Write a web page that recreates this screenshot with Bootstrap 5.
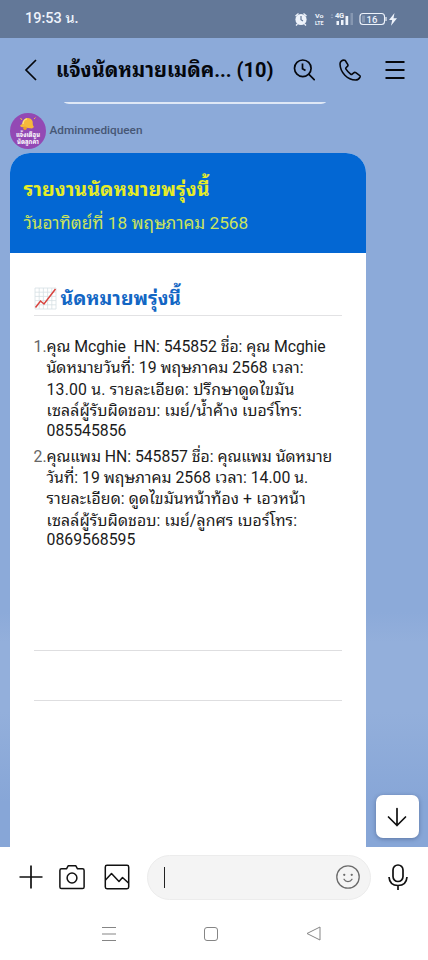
<!DOCTYPE html>
<html lang="th">
<head>
    <meta charset="UTF-8">
    <meta name="viewport" content="width=device-width, initial-scale=1.0">
    <title>แจ้งนัดหมายเมดิควีน</title>
    <link href="https://cdn.jsdelivr.net/npm/bootstrap@5.3.3/dist/css/bootstrap.min.css" rel="stylesheet">
    <style>
        body {
            font-family: Roboto, "Noto Sans Thai Looped", "Droid Sans Thai", Loma, Waree, Garuda, "Noto Sans", sans-serif;
            background-color: #fff;
            color: #111;
        }
        svg {
            display: block;
            flex-shrink: 0;
            fill: none;
            stroke: currentColor;
        }
        .phone {
            width: 428px;
            height: 960px;
        }
        .status-bar {
            height: 38px;
            padding: 0 30px 0 25px;
            background-color: #637898;
            color: #eef3fb;
            font-size: 14.5px;
            font-weight: 500;
        }
        .chat-header {
            height: 64px;
            padding: 0 23px 0 24px;
            background-color: #8caad9;
            color: #05070c;
        }
        .chat-title {
            margin-left: 19px;
            font-size: 20px;
            font-weight: 700;
        }
        .chat-area {
            height: 745px;
            padding: 0 9.5px;
            background: linear-gradient(#8caad9 0, #8caad9 510px, #93afdb 540px, #93afdb 610px, #87a6d7 700px);
        }
        .prev-bubble {
            width: 262px;
            height: 2px;
            margin-left: 54px;
            background-color: #dfe8f6;
            border-radius: 0 0 8px 8px / 0 0 2px 2px;
        }
        .sender {
            height: 36px;
            margin-top: 9px;
            font-size: 11.8px;
            font-weight: 500;
            color: #475775;
        }
        .report {
            width: 356.5px;
            margin-top: 4px;
            border-radius: 20px 20px 0 0;
        }
        .report-top {
            height: 100px;
            padding: 24px 14px 0;
            background-color: #0367d3;
            color: #e6ec28;
        }
        .report-title {
            font-size: 19.7px;
            font-weight: 700;
            line-height: 26px;
        }
        .report-date {
            margin-top: 7px;
            font-size: 17.2px;
            line-height: 26px;
            color: #cbe45c;
        }
        .report-body {
            padding: 30px 24px 0;
        }
        .section-head {
            height: 33px;
            border-bottom: 1px solid #e2e2e4;
            font-size: 19.4px;
            font-weight: 700;
            line-height: 32px;
            color: #1266c4;
        }
        .entry {
            margin-top: 20px;
            font-size: 15.8px;
            line-height: 21.4px;
            color: #1b1b1b;
        }
        .entry + .entry {
            margin-top: 6px;
        }
        .entry-no {
            width: 13px;
            color: #666;
        }
        .entry span {
            display: block;
            white-space: nowrap;
        }
        .entry span:last-child {
            line-height: 18px;
        }
        .entry .tight {
            letter-spacing: -.04px;
        }
        .entry .loose {
            letter-spacing: .1px;
        }
        .entry .looser {
            letter-spacing: .2px;
        }
        .rule-line {
            height: 1px;
            margin-top: 49px;
            background-color: #dedee0;
        }
        .entry + .rule-line {
            margin-top: 101px;
        }
        .to-bottom {
            right: 9.5px;
            bottom: 9px;
            width: 43px;
            height: 43px;
            border-radius: 7px;
            box-shadow: 0 1px 4px rgba(40, 60, 100, .45);
        }
        .composer {
            height: 60px;
            padding: 0 20px 0 18.5px;
        }
        .gallery {
            margin-left: 19px;
        }
        .msg-input {
            width: 224px;
            height: 45px;
            margin-left: 17.5px;
            padding: 0 10px 0 16px;
            background-color: #f4f4f4;
            border: 1px solid #ececec;
            color: #6b6b6b;
        }
        .caret {
            width: 1px;
            height: 21px;
            background-color: #222;
        }
        .sys-nav {
            height: 53px;
            padding: 0 107.5px 0 100.5px;
            color: #858585;
        }
    </style>
</head>
<body>
<div class="phone d-flex flex-column overflow-hidden">

    <!-- Status bar -->
    <div class="status-bar d-flex align-items-center justify-content-between">
        <span id="clock">19:53 น.</span>
        <svg width="104" height="16" viewBox="294 11 104 16">
            <circle cx="301" cy="19.500" r="5.600" fill="#eef3fb" stroke="none"/>
            <path d="M295.500 16l3-2.500M306.500 16l-3-2.500M297.500 24l-1.500 1.500M304.500 24l1.500 1.500" stroke-width="1.300"/>
            <path d="M301 16v3.700l2 1.200" stroke="#637898" stroke-width="1.200"/>
            <g fill="#eef3fb" stroke="none" font-family="Roboto, sans-serif" font-weight="700">
                <text x="315" y="17.700" font-size="6" textLength="8.500" lengthAdjust="spacingAndGlyphs">Vo</text>
                <text x="315" y="24.800" font-size="6" textLength="8.500" lengthAdjust="spacingAndGlyphs">LTE</text>
                <text x="335" y="18" font-size="7.500" textLength="9">4G</text>
                <text x="366.500" y="22.700" font-size="9.500" font-weight="500" textLength="11">16</text>
                <path d="M336.500 21h2.500v4h-2.500zM341 20h2.500v5H341zM345.500 16h2.700v9h-2.700z"/>
                <path d="M350.500 13h2.500v12h-2.500z" opacity=".25"/>
                <path d="M330.500 15.500l1.500-1.500 1.500 1.500zM330.500 17l1.500 1.500 1.500-1.500z" opacity=".35"/>
                <path d="M394.500 13l-5.500 7h3.200l-1.200 5.800 6-7.500h-3.500z"/>
                <path d="M362 15.500h3v7h-3z" opacity=".25"/>
            </g>
            <rect x="360" y="13.500" width="24.500" height="11" rx="3" stroke-width="1.100"/>
            <path d="M386 17v4" stroke-width="1.200"/>
        </svg>
    </div>

    <!-- Chat header -->
    <div class="chat-header d-flex align-items-center">
        <svg width="13" height="22" viewBox="0 0 13 22" stroke-width="1.700"><path d="M12 1L2 11l10 10"/></svg>
        <div class="chat-title text-nowrap"><span id="title">แจ้งนัดหมายเมดิค... (10)</span></div>
        <div class="d-flex align-items-center ms-auto">
            <svg width="22" height="22" viewBox="0 0 22 22" stroke-width="1.700">
                <circle cx="9.800" cy="9.300" r="8.300"/>
                <path d="M15.700 15.200l6 6M9.500 4.500v5.200l3 1.800"/>
            </svg>
            <svg class="ms-4" width="22" height="22" viewBox="0 0 22 22" stroke-width="1.600" stroke-linejoin="round">
                <path d="M5.200 1.100C3 .9 1 2.700 1 5c.3 8.700 7.500 15.800 15.600 16 1.900 0 3.500-1 4.400-2.900.3-.7.1-1.400-.5-1.800l-3.700-2.600c-.7-.5-1.500-.4-2.100.1l-1.500 1.300c-.5.4-1.100.4-1.600 0-1.800-1.400-3.400-3.100-4.600-5-.4-.6-.2-1.200.2-1.600l1.200-1.100c.6-.5.7-1.300.3-2L6.400 1.800c-.3-.4-.7-.7-1.200-.7z"/>
            </svg>
            <svg width="20" height="20" viewBox="0 0 20 20" stroke-width="1.900" class="ms-4"><path d="M.5 2h19M.5 10h19M.5 18h19"/></svg>
        </div>
    </div>

    <!-- Messages -->
    <div class="chat-area position-relative overflow-hidden">
        <div class="prev-bubble"></div>
        <div class="sender d-flex align-items-center">
            <svg width="36" height="36" viewBox="0 0 36 36">
                <g stroke="none">
                    <circle cx="18" cy="18" r="18" fill="#9349b4"/>
                    <path d="M10 12.500c2.500-1 3-3.500 4-5.500 2-3 7-2.500 8.500 1 .6 2-.4 4 1.500 6l-2 1.500-11-1.500z" fill="#f6b83c"/>
                    <circle cx="15" cy="15.300" r="1.700" fill="#f0a126"/>
                </g>
                <path d="M13 11c0-3 2-5 4-5" stroke="#ffe27c" stroke-width="1.500"/>
                <path d="M10.500 5l1.500 2M24 6l1.500-1.500" stroke="#f6b83c"/>
                <g fill="#fff" stroke="none" font-size="7" font-weight="700">
                    <text x="6" y="23.500" textLength="24" lengthAdjust="spacingAndGlyphs">แจ้งเตือน</text>
                    <text x="7" y="30.500" textLength="22" lengthAdjust="spacingAndGlyphs">นัดลูกค้า</text>
                </g>
            </svg>
            <span class="ms-1"><span id="sender">Adminmediqueen</span></span>
        </div>

        <div class="report bg-white overflow-hidden h-100">
            <div class="report-top">
                <div class="report-title text-nowrap"><span>รายงานนัดหมายพรุ่งนี้</span></div>
                <div class="report-date text-nowrap"><span>วันอาทิตย์ที่ 18 พฤษภาคม 2568</span></div>
            </div>
            <div class="report-body">
                <div class="section-head d-flex text-nowrap">
                    <svg class="mt-1 me-1" width="23" height="23" viewBox="0 0 23 23">
                        <path d="M1 1h21v21H1zM1 5.200h21M1 9.400h21M1 13.600h21M1 17.800h21M5.200 1v21M9.400 1v21M13.600 1v21M17.800 1v21" stroke="#d5dfe5" stroke-width=".8"/>
                        <path d="M1.500 20.500l5-6.500 3.500 3L21.500 2" stroke="#d8433e" stroke-width="1.500"/>
                    </svg>
                    <span>นัดหมายพรุ่งนี้</span>
                </div>

                <div class="entry d-flex">
                    <div class="entry-no">1.</div>
                    <div>
                        <span class="tight">คุณ Mcghie&nbsp; HN: 545852 ชื่อ: คุณ Mcghie</span>
                        <span>นัดหมายวันที่: 19 พฤษภาคม 2568 เวลา:</span>
                        <span class="looser">13.00 น. รายละเอียด: ปรึกษาดูดไขมัน</span>
                        <span class="loose">เซลล์ผู้รับผิดชอบ: เมย์/น้ำค้าง เบอร์โทร:</span>
                        <span>085545856</span>
                    </div>
                </div>
                <div class="entry d-flex">
                    <div class="entry-no">2.</div>
                    <div>
                        <span class="tight">คุณแพม HN: 545857 ชื่อ: คุณแพม นัดหมาย</span>
                        <span>วันที่: 19 พฤษภาคม 2568 เวลา: 14.00 น.</span>
                        <span class="loose">รายละเอียด: ดูดไขมันหน้าท้อง + เอวหน้า</span>
                        <span class="loose">เซลล์ผู้รับผิดชอบ: เมย์/ลูกศร เบอร์โทร:</span>
                        <span>0869568595</span>
                    </div>
                </div>

                <div class="rule-line"></div>
                <div class="rule-line"></div>
            </div>
        </div>

        <div class="to-bottom position-absolute bg-white d-flex align-items-center justify-content-center">
            <svg width="20" height="20" viewBox="0 0 20 20" stroke-width="1.700" stroke-linecap="round" stroke-linejoin="round"><path d="M10 1.500v17M1.500 10l8.500 8.500 8.500-8.500"/></svg>
        </div>
    </div>

    <!-- Message composer -->
    <div class="composer d-flex align-items-center">
        <svg width="24" height="24" viewBox="0 0 24 24" stroke-width="1.700"><path d="M.5 12h23M12 .5v23"/></svg>
        <svg class="ms-3" width="26" height="26" viewBox="0 0 26 26" stroke-width="1.500" stroke-linejoin="round">
            <path d="M2.500 4.800h5L9.300 1.700h7.400l1.800 3.100h5q1.600 0 1.600 1.600v16.500q0 1.600-1.600 1.600h-21q-1.600 0-1.600-1.600V6.400q0-1.600 1.600-1.600z"/>
            <circle cx="13" cy="14" r="4.900"/>
        </svg>
        <svg class="gallery" width="26" height="26" viewBox="0 0 26 26" stroke-width="1.500" stroke-linejoin="round">
            <rect x="1.300" y="1.300" width="23.400" height="23.400" rx="1.700"/>
            <path d="M1.500 16l6-6.500 7.500 8 3.500-4 6 5.500"/>
        </svg>
        <div class="msg-input rounded-pill d-flex align-items-center justify-content-between">
            <div class="caret"></div>
            <svg width="24" height="24" viewBox="0 0 24 24" stroke-width="1.300" stroke-linecap="round">
                <circle cx="12" cy="12" r="11.200"/>
                <path d="M8 14.300c1.700 3 6.300 3 8 0"/>
                <path d="M8.200 9.800h.1M15.700 9.800h.1" stroke-width="2.200"/>
            </svg>
        </div>
        <svg class="ms-auto" width="20" height="27" viewBox="0 0 20 27" stroke-width="1.700">
            <rect x="5" y="1" width="10" height="16.500" rx="5"/>
            <path d="M1 13c.4 5.500 4 8.500 9 8.500s8.600-3 9-8.500M10 21.500V26"/>
        </svg>
    </div>

    <!-- Android navigation -->
    <div class="sys-nav d-flex align-items-center justify-content-between">
        <svg width="16" height="16" viewBox="0 0 16 16"><path d="M1 1.500h14M1 8h14M1 14.500h14"/></svg>
        <svg width="14" height="14" viewBox="0 0 14 14"><rect x=".5" y=".5" width="13" height="13" rx="2.500"/></svg>
        <svg width="15" height="15" viewBox="0 0 15 15" stroke-linejoin="round"><path d="M14 1v13L1 7.500z"/></svg>
    </div>
</div>

<script src="https://cdn.jsdelivr.net/npm/bootstrap@5.3.3/dist/js/bootstrap.bundle.min.js"></script>
</body>
</html>
